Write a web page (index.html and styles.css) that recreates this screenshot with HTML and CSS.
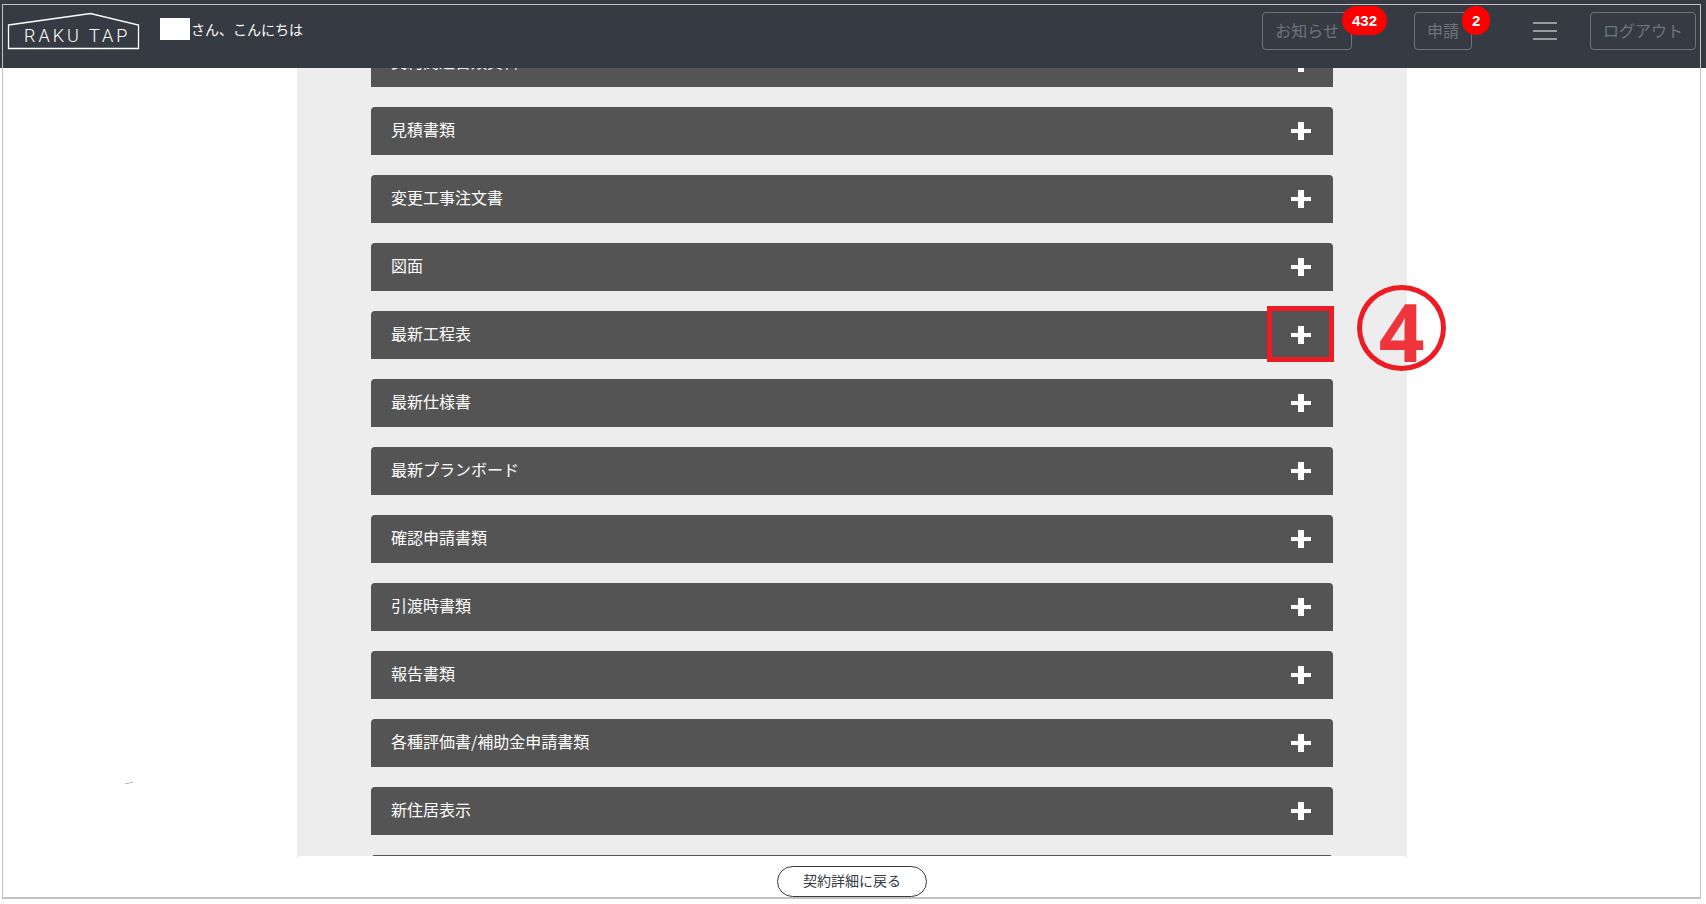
FILE: index.html
```
<!DOCTYPE html>
<html lang="ja">
  <head>
    <meta charset="utf-8">
    <title>RAKU TAP</title>
    <link rel="stylesheet" href="styles.css">
  </head>
  <body>
    <header>
      <a class="logo" href="#">
        <svg width="133" height="38" viewBox="0 0 133 38">
          <path d="M1.500 13 L83.500 1.500 L131.500 13 V36.500 H1.500 Z" fill="none" stroke="#fff" stroke-width="1.3"/>
          <text x="17" y="30">RAKU TAP</text>
        </svg>
      </a>
      <p class="greeting"><span class="user_name"></span>さん、こんにちは</p>
      <nav>
        <button class="btn news">お知らせ<span class="badge">432</span></button>
        <button class="btn apply">申請<span class="badge">2</span></button>
        <button class="menu" aria-label="メニュー"><i></i><i></i><i></i></button>
        <button class="btn">ログアウト</button>
      </nav>
    </header>

    <svg class="defs" width="0" height="0">
      <symbol id="plus" viewBox="0 0 20 18">
        <path d="M7 0h6v7h7v4h-7v7H7v-7H0V7h7z" fill="#fff"/>
      </symbol>
    </svg>

    <main>
      <div class="list">
        <button class="row"><span>契約関連書類資料</span><svg><use href="#plus"/></svg></button>
        <button class="row"><span>見積書類</span><svg><use href="#plus"/></svg></button>
        <button class="row"><span>変更工事注文書</span><svg><use href="#plus"/></svg></button>
        <button class="row"><span>図面</span><svg><use href="#plus"/></svg></button>
        <button class="row"><span>最新工程表</span><svg><use href="#plus"/></svg>
          <b class="mark"></b>
          <b class="step">4</b>
        </button>
        <button class="row"><span>最新仕様書</span><svg><use href="#plus"/></svg></button>
        <button class="row"><span>最新プランボード</span><svg><use href="#plus"/></svg></button>
        <button class="row"><span>確認申請書類</span><svg><use href="#plus"/></svg></button>
        <button class="row"><span>引渡時書類</span><svg><use href="#plus"/></svg></button>
        <button class="row"><span>報告書類</span><svg><use href="#plus"/></svg></button>
        <button class="row"><span>各種評価書/補助金申請書類</span><svg><use href="#plus"/></svg></button>
        <button class="row"><span>新住居表示</span><svg><use href="#plus"/></svg></button>
        <button class="row" aria-label="次の書類"></button>
      </div>
    </main>

    <footer>
      <button class="back">契約詳細に戻る</button>
    </footer>
    <div class="frame"></div>
    <svg class="scratch" width="8" height="2"><path d="M0 1.500h4M4 .5h4" stroke="#bbb"/></svg>
  </body>
</html>
```

FILE: styles.css
```
* {
	box-sizing: border-box;
}
body {
	margin: 0;
	height: 100vh;
	display: flex;
	flex-direction: column;
	overflow: hidden;
	position: relative;
	background: #fff;
	font-family: "Noto Sans CJK JP", sans-serif;
	font-size: 16px;
}
button {
	font-family: inherit;
	font-size: 16px;
	cursor: pointer;
}

/* header */
header {
	flex: none;
	height: 68px;
	padding: 12px 10px 0 7px;
	display: flex;
	align-items: flex-start;
	background: #363a42;
	color: #fff;
}
.logo svg {
	display: block;
}
.logo text {
	fill: #fff;
	font-family: Roboto, sans-serif;
	font-weight: 300;
	font-size: 18px;
	letter-spacing: 3px;
}
.greeting {
	display: flex;
	align-items: center;
	margin: 6px 0 0 20px;
	font-size: 14px;
	line-height: 22px;
}
.user_name {
	width: 30px;
	height: 22px;
	margin-right: 1px;
	background: #fff;
}
nav {
	margin-left: auto;
	display: flex;
}
.btn {
	position: relative;
	height: 38px;
	padding: 0 12px 3px;
	line-height: 24px;
	border: 1px solid #6c757d;
	border-radius: 4px;
	background: transparent;
	color: #6c757d;
}
.news {
	margin-right: 62px;
}
.apply {
	margin-right: 61px;
}
.badge {
	position: absolute;
	top: -7px;
	left: 100%;
	margin-left: -9px;
	padding: 0 10px;
	border-radius: 15px;
	background: #f00;
	color: #fff;
	font: bold 15px/29px "Liberation Sans", Arial, sans-serif;
}
.menu {
	width: 24px;
	height: 38px;
	margin-right: 33px;
	padding: 0;
	display: flex;
	flex-direction: column;
	justify-content: center;
	gap: 6px;
	border: 0;
	background: none;
}
.menu i {
	height: 2px;
	background: #9a9c9f;
}

.defs {
	position: absolute;
}

/* document list */
main,
footer {
	width: calc(100% - 2px);
	max-width: 1110px;
	margin: 0 auto;
	position: relative;
	right: 1px;
}
main {
	flex: 1;
	min-height: 0;
	overflow-x: visible;
	overflow-y: clip;
	background: #ededed;
}
.list {
	display: flex;
	flex-direction: column;
	gap: 20px;
	margin-top: -29px;
	padding: 0 74px;
}
.row {
	position: relative;
	flex: none;
	height: 48px;
	padding: 0 22px 0 20px;
	display: flex;
	align-items: center;
	justify-content: space-between;
	border: 0;
	border-radius: 4px 4px 0 0;
	background: #545454;
	color: #fff;
	text-align: left;
}
.row span {
	padding-bottom: 4px;
}
.row svg {
	width: 20px;
	height: 18px;
}

/* step marker */
.mark {
	position: absolute;
	top: -5px;
	right: -1px;
	width: 67px;
	height: 56px;
	border: 5px solid #ed1c24;
}
.step {
	position: absolute;
	top: -26px;
	left: 100%;
	z-index: 1;
	width: 89px;
	height: 86px;
	margin-left: 24px;
	border: 5px solid #ed1c24;
	border-radius: 50%;
	color: #ef343b;
	font: bold 80px/82px "Open Sans", sans-serif;
	text-align: center;
}

/* footer */
footer {
	flex: none;
	height: 48px;
	margin-top: -2px;
	padding-top: 10px;
	border-radius: 4px 4px 0 0;
	background: #fff;
	text-align: center;
}
.back {
	height: 31px;
	padding: 0 25px 3px;
	border: 1px solid #343a40;
	border-radius: 16px;
	background: #fff;
	color: #343a40;
	font-size: 14px;
	line-height: 20px;
}

.frame {
	position: absolute;
	top: 4px;
	right: 5px;
	bottom: 5px;
	left: 2px;
	border: 1px solid #c3c3c3;
	border-bottom-width: 2px;
	pointer-events: none;
}
.scratch {
	position: absolute;
	left: 125px;
	top: 782px;
}
```
